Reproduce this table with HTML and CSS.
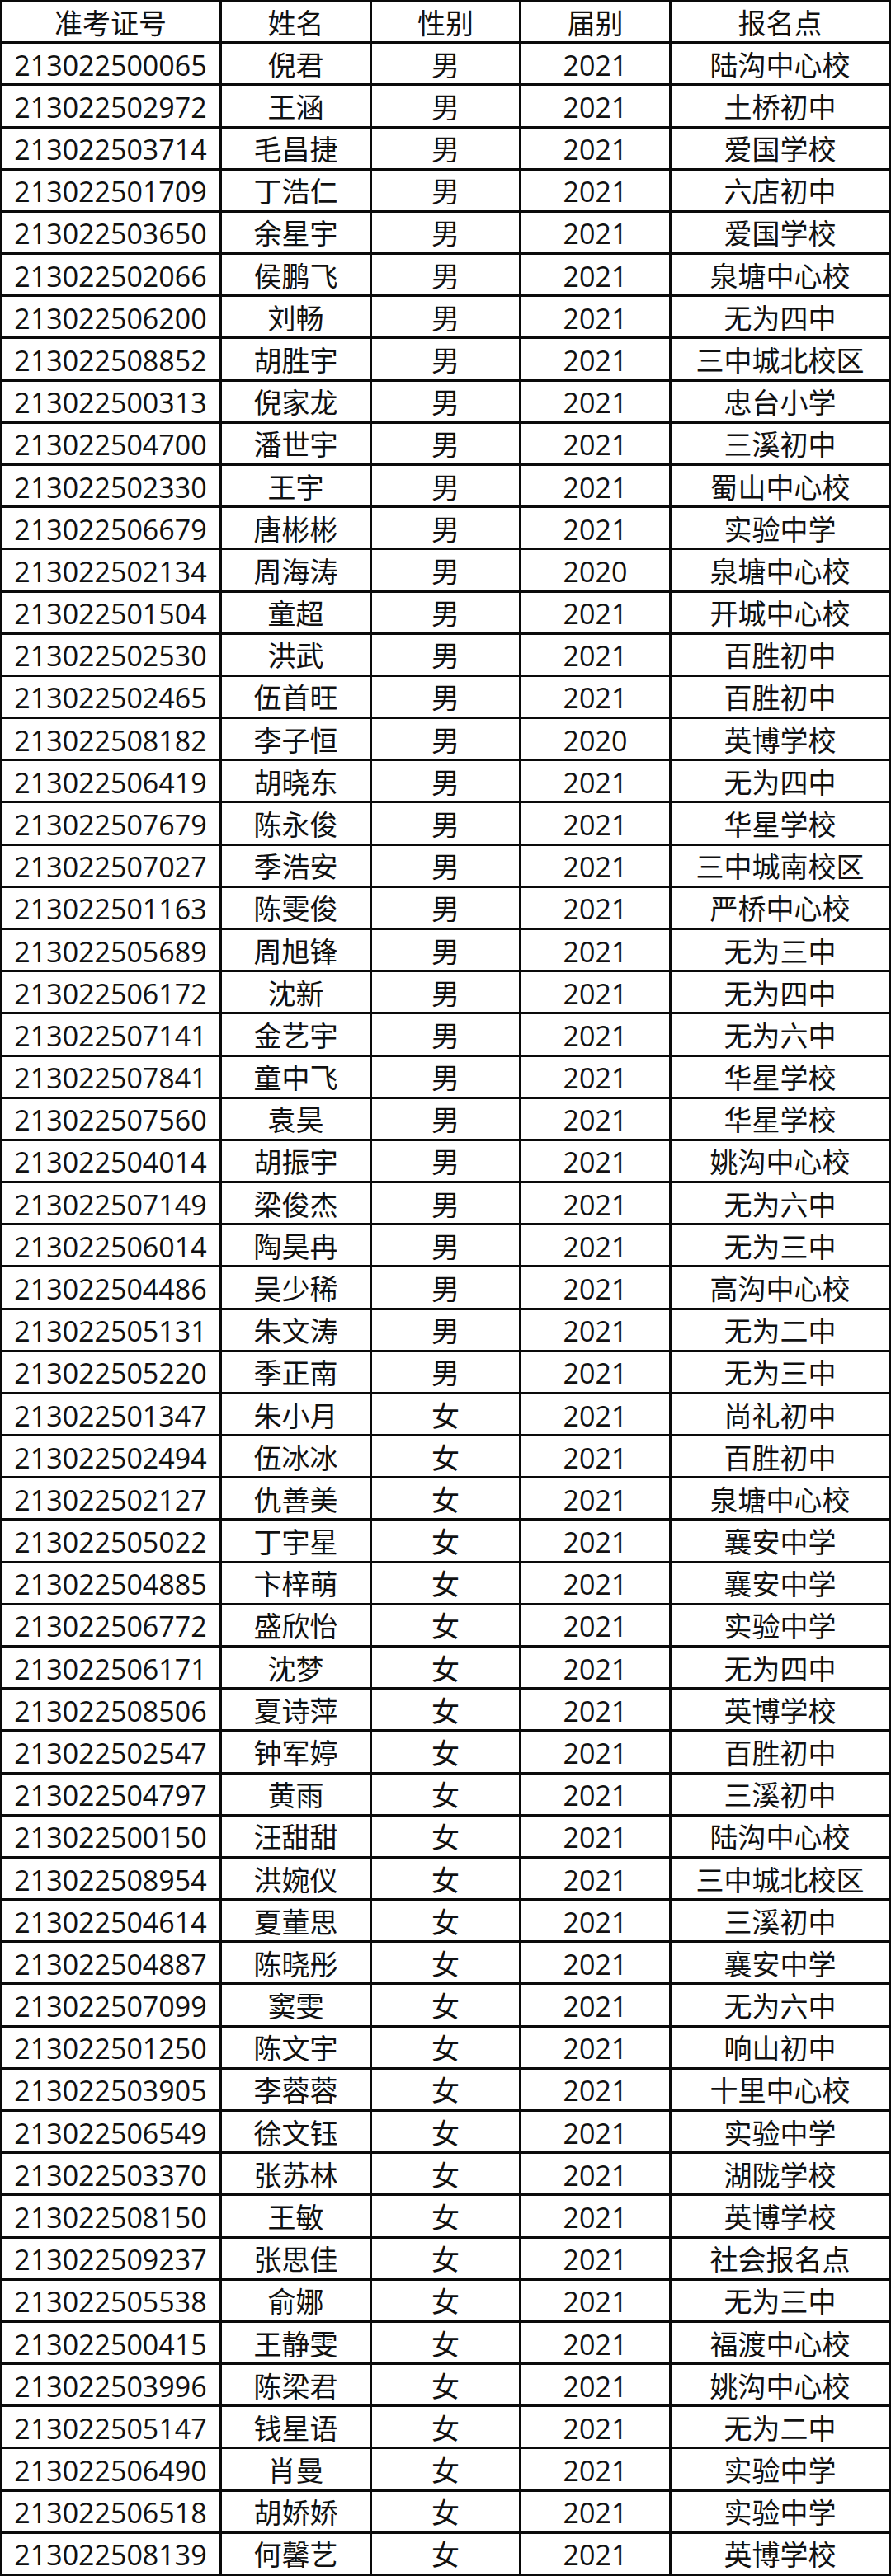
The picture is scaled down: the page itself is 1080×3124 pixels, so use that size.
FILE: index.html
```html
<!DOCTYPE html>
<html lang="zh-CN">
<head>
<meta charset="utf-8">
<title>名单</title>
<link rel="stylesheet" href="styles.css">
</head>
<body>
<div class="sheet">
<div class="c h">准考证号</div><div class="c h">姓名</div><div class="c h">性别</div><div class="c h">届别</div><div class="c h">报名点</div>
<div class="c">213022500065</div><div class="c">倪君</div><div class="c">男</div><div class="c">2021</div><div class="c">陆沟中心校</div>
<div class="c">213022502972</div><div class="c">王涵</div><div class="c">男</div><div class="c">2021</div><div class="c">土桥初中</div>
<div class="c">213022503714</div><div class="c">毛昌捷</div><div class="c">男</div><div class="c">2021</div><div class="c">爱国学校</div>
<div class="c">213022501709</div><div class="c">丁浩仁</div><div class="c">男</div><div class="c">2021</div><div class="c">六店初中</div>
<div class="c">213022503650</div><div class="c">余星宇</div><div class="c">男</div><div class="c">2021</div><div class="c">爱国学校</div>
<div class="c">213022502066</div><div class="c">侯鹏飞</div><div class="c">男</div><div class="c">2021</div><div class="c">泉塘中心校</div>
<div class="c">213022506200</div><div class="c">刘畅</div><div class="c">男</div><div class="c">2021</div><div class="c">无为四中</div>
<div class="c">213022508852</div><div class="c">胡胜宇</div><div class="c">男</div><div class="c">2021</div><div class="c">三中城北校区</div>
<div class="c">213022500313</div><div class="c">倪家龙</div><div class="c">男</div><div class="c">2021</div><div class="c">忠台小学</div>
<div class="c">213022504700</div><div class="c">潘世宇</div><div class="c">男</div><div class="c">2021</div><div class="c">三溪初中</div>
<div class="c">213022502330</div><div class="c">王宇</div><div class="c">男</div><div class="c">2021</div><div class="c">蜀山中心校</div>
<div class="c">213022506679</div><div class="c">唐彬彬</div><div class="c">男</div><div class="c">2021</div><div class="c">实验中学</div>
<div class="c">213022502134</div><div class="c">周海涛</div><div class="c">男</div><div class="c">2020</div><div class="c">泉塘中心校</div>
<div class="c">213022501504</div><div class="c">童超</div><div class="c">男</div><div class="c">2021</div><div class="c">开城中心校</div>
<div class="c">213022502530</div><div class="c">洪武</div><div class="c">男</div><div class="c">2021</div><div class="c">百胜初中</div>
<div class="c">213022502465</div><div class="c">伍首旺</div><div class="c">男</div><div class="c">2021</div><div class="c">百胜初中</div>
<div class="c">213022508182</div><div class="c">李子恒</div><div class="c">男</div><div class="c">2020</div><div class="c">英博学校</div>
<div class="c">213022506419</div><div class="c">胡晓东</div><div class="c">男</div><div class="c">2021</div><div class="c">无为四中</div>
<div class="c">213022507679</div><div class="c">陈永俊</div><div class="c">男</div><div class="c">2021</div><div class="c">华星学校</div>
<div class="c">213022507027</div><div class="c">季浩安</div><div class="c">男</div><div class="c">2021</div><div class="c">三中城南校区</div>
<div class="c">213022501163</div><div class="c">陈雯俊</div><div class="c">男</div><div class="c">2021</div><div class="c">严桥中心校</div>
<div class="c">213022505689</div><div class="c">周旭锋</div><div class="c">男</div><div class="c">2021</div><div class="c">无为三中</div>
<div class="c">213022506172</div><div class="c">沈新</div><div class="c">男</div><div class="c">2021</div><div class="c">无为四中</div>
<div class="c">213022507141</div><div class="c">金艺宇</div><div class="c">男</div><div class="c">2021</div><div class="c">无为六中</div>
<div class="c">213022507841</div><div class="c">童中飞</div><div class="c">男</div><div class="c">2021</div><div class="c">华星学校</div>
<div class="c">213022507560</div><div class="c">袁昊</div><div class="c">男</div><div class="c">2021</div><div class="c">华星学校</div>
<div class="c">213022504014</div><div class="c">胡振宇</div><div class="c">男</div><div class="c">2021</div><div class="c">姚沟中心校</div>
<div class="c">213022507149</div><div class="c">梁俊杰</div><div class="c">男</div><div class="c">2021</div><div class="c">无为六中</div>
<div class="c">213022506014</div><div class="c">陶昊冉</div><div class="c">男</div><div class="c">2021</div><div class="c">无为三中</div>
<div class="c">213022504486</div><div class="c">吴少稀</div><div class="c">男</div><div class="c">2021</div><div class="c">高沟中心校</div>
<div class="c">213022505131</div><div class="c">朱文涛</div><div class="c">男</div><div class="c">2021</div><div class="c">无为二中</div>
<div class="c">213022505220</div><div class="c">季正南</div><div class="c">男</div><div class="c">2021</div><div class="c">无为三中</div>
<div class="c">213022501347</div><div class="c">朱小月</div><div class="c">女</div><div class="c">2021</div><div class="c">尚礼初中</div>
<div class="c">213022502494</div><div class="c">伍冰冰</div><div class="c">女</div><div class="c">2021</div><div class="c">百胜初中</div>
<div class="c">213022502127</div><div class="c">仇善美</div><div class="c">女</div><div class="c">2021</div><div class="c">泉塘中心校</div>
<div class="c">213022505022</div><div class="c">丁宇星</div><div class="c">女</div><div class="c">2021</div><div class="c">襄安中学</div>
<div class="c">213022504885</div><div class="c">卞梓萌</div><div class="c">女</div><div class="c">2021</div><div class="c">襄安中学</div>
<div class="c">213022506772</div><div class="c">盛欣怡</div><div class="c">女</div><div class="c">2021</div><div class="c">实验中学</div>
<div class="c">213022506171</div><div class="c">沈梦</div><div class="c">女</div><div class="c">2021</div><div class="c">无为四中</div>
<div class="c">213022508506</div><div class="c">夏诗萍</div><div class="c">女</div><div class="c">2021</div><div class="c">英博学校</div>
<div class="c">213022502547</div><div class="c">钟军婷</div><div class="c">女</div><div class="c">2021</div><div class="c">百胜初中</div>
<div class="c">213022504797</div><div class="c">黄雨</div><div class="c">女</div><div class="c">2021</div><div class="c">三溪初中</div>
<div class="c">213022500150</div><div class="c">汪甜甜</div><div class="c">女</div><div class="c">2021</div><div class="c">陆沟中心校</div>
<div class="c">213022508954</div><div class="c">洪婉仪</div><div class="c">女</div><div class="c">2021</div><div class="c">三中城北校区</div>
<div class="c">213022504614</div><div class="c">夏董思</div><div class="c">女</div><div class="c">2021</div><div class="c">三溪初中</div>
<div class="c">213022504887</div><div class="c">陈晓彤</div><div class="c">女</div><div class="c">2021</div><div class="c">襄安中学</div>
<div class="c">213022507099</div><div class="c">窦雯</div><div class="c">女</div><div class="c">2021</div><div class="c">无为六中</div>
<div class="c">213022501250</div><div class="c">陈文宇</div><div class="c">女</div><div class="c">2021</div><div class="c">响山初中</div>
<div class="c">213022503905</div><div class="c">李蓉蓉</div><div class="c">女</div><div class="c">2021</div><div class="c">十里中心校</div>
<div class="c">213022506549</div><div class="c">徐文钰</div><div class="c">女</div><div class="c">2021</div><div class="c">实验中学</div>
<div class="c">213022503370</div><div class="c">张苏林</div><div class="c">女</div><div class="c">2021</div><div class="c">湖陇学校</div>
<div class="c">213022508150</div><div class="c">王敏</div><div class="c">女</div><div class="c">2021</div><div class="c">英博学校</div>
<div class="c">213022509237</div><div class="c">张思佳</div><div class="c">女</div><div class="c">2021</div><div class="c">社会报名点</div>
<div class="c">213022505538</div><div class="c">俞娜</div><div class="c">女</div><div class="c">2021</div><div class="c">无为三中</div>
<div class="c">213022500415</div><div class="c">王静雯</div><div class="c">女</div><div class="c">2021</div><div class="c">福渡中心校</div>
<div class="c">213022503996</div><div class="c">陈梁君</div><div class="c">女</div><div class="c">2021</div><div class="c">姚沟中心校</div>
<div class="c">213022505147</div><div class="c">钱星语</div><div class="c">女</div><div class="c">2021</div><div class="c">无为二中</div>
<div class="c">213022506490</div><div class="c">肖曼</div><div class="c">女</div><div class="c">2021</div><div class="c">实验中学</div>
<div class="c">213022506518</div><div class="c">胡娇娇</div><div class="c">女</div><div class="c">2021</div><div class="c">实验中学</div>
<div class="c">213022508139</div><div class="c">何馨艺</div><div class="c">女</div><div class="c">2021</div><div class="c">英博学校</div>
</div>
</body>
</html>
```
FILE: styles.css
```css
html, body {
  margin: 0;
  padding: 0;
  background: #ffffff;
}

.sheet {
  width: 1080px;
  height: 3124px;
  box-sizing: border-box;
  background: #0a0a0a;
  padding: 2px 3px 3px 2px;
  display: grid;
  grid-template-columns: 264px 179px 178px 179px 1fr;
  grid-template-rows: repeat(61, 1fr);
  gap: 3px;
  font-family: "Open Sans", "Noto Sans CJK SC", sans-serif;
  font-size: 34px;
  color: #111111;
}

.c {
  background: #ffffff;
  display: flex;
  align-items: center;
  justify-content: center;
  line-height: 1;
  padding-top: 3px;
  box-sizing: border-box;
  white-space: nowrap;
}
```
